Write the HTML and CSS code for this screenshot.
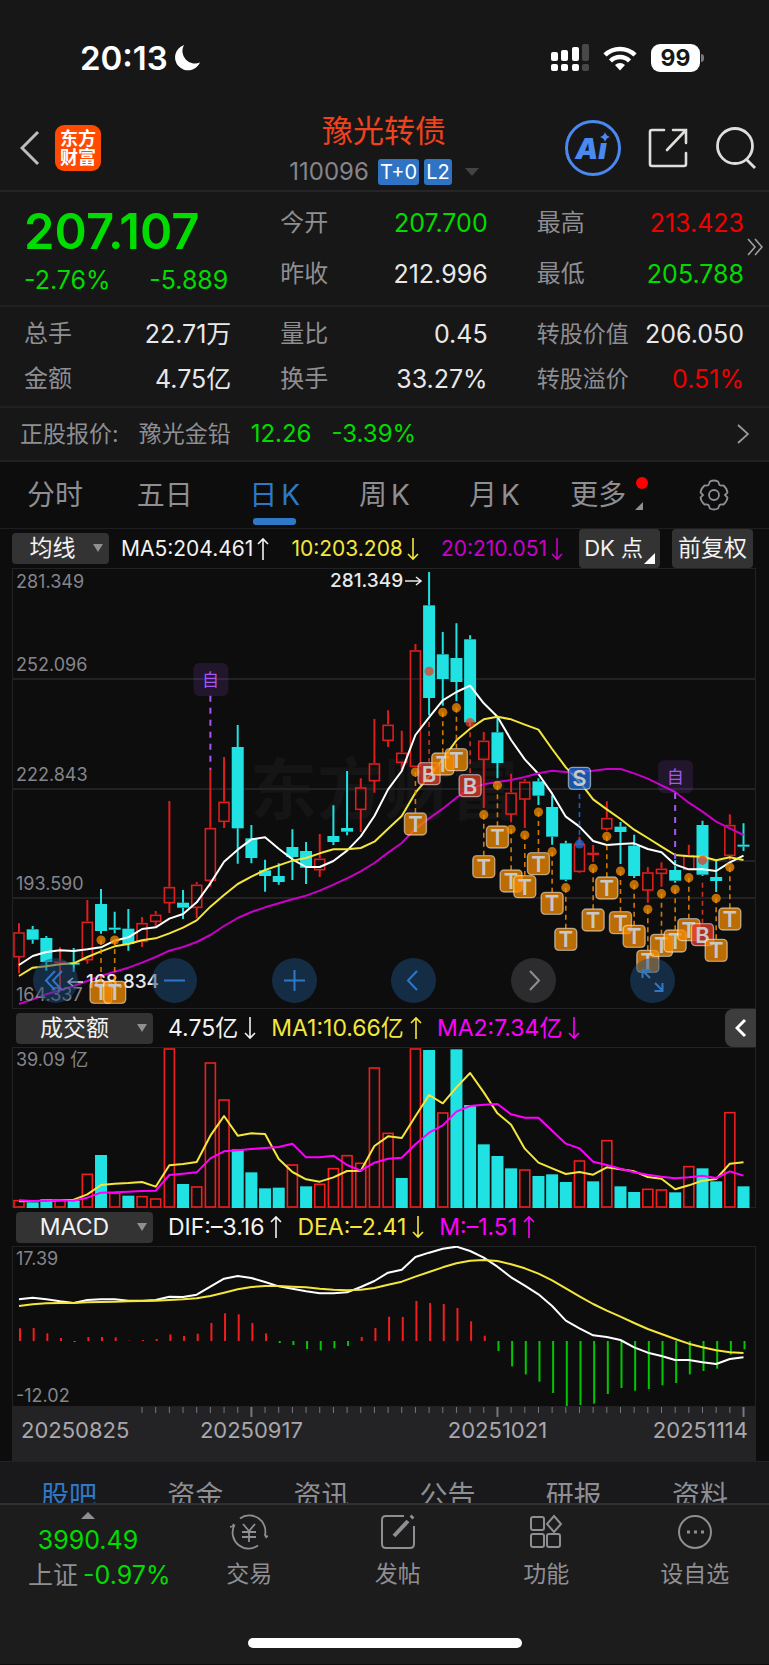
FILE: index.html
```html
<!DOCTYPE html>
<html lang="zh-CN">
<head>
  <meta charset="UTF-8">
  <meta name="viewport" content="width=device-width, initial-scale=1.0">
  <title>豫光转债 110096</title>
  <link rel="stylesheet" href="styles.css">
</head>
<body>
  <svg class="defs" width="0" height="0" aria-hidden="true">
    <symbol id="up" viewBox="0 0 12 24"><path d="M6 23V2M1 7l5-5 5 5" fill="none" stroke="currentColor" stroke-width="1.6"/></symbol>
    <symbol id="down" viewBox="0 0 12 24"><path d="M6 1v21M1 17l5 5 5-5" fill="none" stroke="currentColor" stroke-width="1.6"/></symbol>
  </svg>

  <div class="status">
    <div class="status-time">
      <span>20:13</span>
      <svg width="26" height="26" viewBox="0 0 26 26"><path d="M10 0A13 13 0 1 0 26 17.500A12.500 12.500 0 0 1 10 0z" fill="#fff"/></svg>
    </div>
    <div class="status-icons">
      <svg width="38" height="28" viewBox="0 0 38 28" fill="#fff">
        <rect x="0" y="8" width="7" height="9" rx="2"/><rect x="10" y="6" width="7" height="11" rx="2"/><rect x="21" y="3" width="7" height="14" rx="2"/><rect x="31" y="0" width="7" height="17" rx="2" fill="#48484a"/>
        <rect x="0" y="20" width="7" height="7" rx="2"/><rect x="10" y="20" width="7" height="7" rx="2"/><rect x="21" y="20" width="7" height="7" rx="2"/><rect x="31" y="20" width="7" height="7" rx="2" fill="#48484a"/>
      </svg>
      <svg width="34" height="25" viewBox="0 0 34 25" fill="none" stroke="#fff" stroke-width="4.500">
        <path d="M2 9a21.500 21.500 0 0 1 30 0"/><path d="M7.500 15a13.500 13.500 0 0 1 19 0"/><path d="M17 24.500l-5-5.500a7.500 7.500 0 0 1 10 0z" fill="#fff" stroke="none"/>
      </svg>
      <span class="battery">99</span>
    </div>
  </div>

  <header class="nav">
    <div class="nav-left">
      <button aria-label="返回"><svg width="20" height="36" viewBox="0 0 20 36"><path d="M18 2L2 18l16 16" fill="none" stroke="#bdbdbd" stroke-width="3"/></svg></button>
      <a class="logo" href="#">东方<br>财富</a>
    </div>
    <div class="nav-title">
      <h1>豫光转债</h1>
      <div class="code"><span>110096</span><b>T+0</b><b>L2</b><i></i></div>
    </div>
    <div class="nav-right">
      <button aria-label="Ai">
        <svg width="56" height="56" viewBox="0 0 56 56"><circle cx="28" cy="28" r="26.500" fill="none" stroke="#4a8af0" stroke-width="3"/><text class="ai" x="26" y="39" text-anchor="middle">Aı</text><path d="M40 12q1 4 5 5-4 1-5 5-1-4-5-5 4-1 5-5z" fill="#4a8af0"/></svg>
      </button>
      <button aria-label="分享">
        <svg width="40" height="40" viewBox="0 0 40 40" fill="none" stroke="#dededc" stroke-width="2.600" stroke-linecap="round"><path d="M16 2H4q-2 0-2 2v32q0 2 2 2h32q2 0 2-2V25M25 2h13v13M37 3L19 22"/></svg>
      </button>
      <button aria-label="搜索">
        <svg width="42" height="42" viewBox="0 0 42 42" fill="none" stroke="#dededc" stroke-width="2.800"><circle cx="20" cy="19" r="17.500"/><path d="M31 32l9 9"/></svg>
      </button>
    </div>
  </header>

  <section class="quote">
    <div class="quote-grid top">
      <div>
        <div class="price green">207.107</div>
        <div class="change green"><span>-2.76%</span><span>-5.889</span></div>
      </div>
      <dl>
        <div><dt>今开</dt><dd class="green">207.700</dd></div>
        <div><dt>昨收</dt><dd>212.996</dd></div>
      </dl>
      <dl>
        <div><dt>最高</dt><dd class="red">213.423</dd></div>
        <div><dt>最低</dt><dd class="green">205.788</dd></div>
      </dl>
      <button class="more" aria-label="展开"><svg width="16" height="18" viewBox="0 0 16 18"><path d="M1 1l7 8-7 8M8 1l7 8-7 8" fill="none" stroke="#a0a0a4" stroke-width="1.600"/></svg></button>
    </div>
    <div class="quote-grid bottom">
      <dl>
        <div><dt>总手</dt><dd>22.71万</dd></div>
        <div><dt>金额</dt><dd>4.75亿</dd></div>
      </dl>
      <dl>
        <div><dt>量比</dt><dd>0.45</dd></div>
        <div><dt>换手</dt><dd>33.27%</dd></div>
      </dl>
      <dl class="long">
        <div><dt>转股价值</dt><dd>206.050</dd></div>
        <div><dt>转股溢价</dt><dd class="red">0.51%</dd></div>
      </dl>
    </div>
    <a class="underlying" href="#">
      <span>正股报价:</span><span>豫光金铅</span><span class="num green">12.26</span><span class="num green">-3.39%</span>
      <svg width="12" height="20" viewBox="0 0 12 20"><path d="M1 1l10 9-10 9" fill="none" stroke="#9a9a9e" stroke-width="1.800"/></svg>
    </a>
  </section>

  <nav class="periods">
    <button>分时</button>
    <button>五日</button>
    <button class="active">日<span>K</span></button>
    <button>周<span>K</span></button>
    <button>月<span>K</span></button>
    <button class="more-period">更多</button>
    <button aria-label="设置">
      <svg width="32" height="32" viewBox="0 0 32 32" fill="none" stroke="#8e8e93" stroke-width="1.800"><circle cx="16" cy="16" r="5"/><path d="M12 2.500q4-2 8 0l1.500 3.500q1 .8 4 .5 3.500 3 4 7l-2.500 2.500 2.500 2.500q-.5 4-4 7-3-.3-4 .5L20 29.500q-4 2-8 0L10.500 26q-1-.8-4-.5-3.500-3-4-7L5 16l-2.500-2.500q.5-4 4-7 3 .3 4-.5z"/></svg>
    </button>
  </nav>

  <main class="charts">
    <div class="row main-row">
      <label class="picker small"><select aria-label="主图指标"><option>均线</option></select></label>
      <span class="white">MA5:204.461<svg><use href="#up"/></svg></span>
      <span class="yellow">10:203.208<svg><use href="#down"/></svg></span>
      <span class="purple">20:210.051<svg><use href="#down"/></svg></span>
      <div class="tools">
        <button class="tool dk">DK 点</button>
        <button class="tool">前复权</button>
      </div>
    </div>

    <div class="kline">
      <svg id="kline" viewBox="0 0 745 441"></svg>
      <div class="controls">
        <button aria-label="最左"><svg viewBox="0 0 45 45"><path d="M22 13l-9 9.500 9 9.500M29 13l-9 9.500 9 9.500"/></svg></button>
        <button aria-label="缩小"><svg viewBox="0 0 45 45"><path d="M12 22.500h21"/></svg></button>
        <button aria-label="放大"><svg viewBox="0 0 45 45"><path d="M12 22.500h21M22.500 12v21"/></svg></button>
        <button aria-label="左移"><svg viewBox="0 0 45 45"><path d="M26 13l-9 9.500 9 9.500"/></svg></button>
        <button class="off" aria-label="右移"><svg viewBox="0 0 45 45"><path d="M19 13l9 9.500-9 9.500"/></svg></button>
        <button aria-label="全屏"><svg viewBox="0 0 45 45"><path d="M12.500 20v-8h8M13 13l7 7M32.500 25v8h-8M32 32l-7-7"/></svg></button>
      </div>
    </div>

    <div class="row sub-row">
      <label class="picker"><select aria-label="副图指标一"><option>成交额</option></select></label>
      <span class="white">4.75亿<svg><use href="#down"/></svg></span>
      <span class="yellow">MA1:10.66亿<svg><use href="#up"/></svg></span>
      <span class="magenta">MA2:7.34亿<svg><use href="#down"/></svg></span>
      <button class="fold" aria-label="收起"><svg width="12" height="20" viewBox="0 0 12 20"><path d="M10 2l-8 8 8 8" fill="none" stroke="#fff" stroke-width="3"/></svg></button>
    </div>
    <svg id="volume" viewBox="0 0 745 161"></svg>

    <div class="row sub-row">
      <label class="picker"><select aria-label="副图指标二"><option>MACD</option></select></label>
      <span class="white">DIF:–3.16<svg><use href="#up"/></svg></span>
      <span class="yellow">DEA:–2.41<svg><use href="#down"/></svg></span>
      <span class="magenta">M:–1.51<svg><use href="#up"/></svg></span>
    </div>
    <svg id="macd" viewBox="0 0 745 215"></svg>
  </main>

  <nav class="news">
    <a class="active" href="#">股吧</a>
    <a href="#">资金</a>
    <a href="#">资讯</a>
    <a href="#">公告</a>
    <a href="#">研报</a>
    <a href="#">资料</a>
  </nav>

  <footer class="footer">
    <div class="toolbar">
      <a class="index" href="#">
        <span class="index-value green"><i></i>3990.49</span>
        <span>上证 <em class="green">-0.97%</em></span>
      </a>
      <button>
        <svg width="40" height="36" viewBox="0 0 40 36" fill="none" stroke="#8e8e93" stroke-width="1.800"><path d="M11 4.500A16 16 0 0 1 36 21l2 3M29 31.500A16 16 0 0 1 5 12l-4 1M5 12l-1-2M36 23l3-1"/><path d="M14 10l6 7 6-7M20 17v11M13 18h14M13 23h14"/></svg>
        交易
      </button>
      <button>
        <svg width="40" height="36" viewBox="0 0 40 36" fill="none" stroke="#8e8e93" stroke-width="2"><path d="M26 2H8q-4 0-4 4v24q0 4 4 4h24q4 0 4-4V12"/><path d="M16 22l14-15M33 4l2-2" stroke-width="4"/></svg>
        发帖
      </button>
      <button>
        <svg width="40" height="36" viewBox="0 0 40 36" fill="none" stroke="#8e8e93" stroke-width="2"><rect x="5" y="3" width="13" height="13" rx="2"/><rect x="5" y="20" width="13" height="13" rx="2"/><rect x="21" y="20" width="13" height="13" rx="2"/><path d="M28 2l7 8-7 8-7-8z"/></svg>
        功能
      </button>
      <button>
        <svg width="40" height="36" viewBox="0 0 40 36" fill="none" stroke="#8e8e93" stroke-width="2"><circle cx="20" cy="18" r="16"/><path d="M12 18h3M19 18h3M26 18h3" stroke-width="3"/></svg>
        设自选
      </button>
    </div>
    <div class="home-bar"></div>
  </footer>

  <script src="chart.js"></script>
</body>
</html>
```
FILE: styles.css
```css
* {
  box-sizing: border-box;
}
body {
  margin: 0;
  background: #0d0d0d;
  color: #e8e8e8;
  font-family: Inter, "Noto Sans CJK SC", sans-serif;
}
button, select {
  font: inherit;
  color: inherit;
  background: none;
  border: none;
  padding: 0;
  cursor: pointer;
}
a {
  color: inherit;
  text-decoration: none;
}
svg {
  display: block;
}
dl, dd, h1 {
  margin: 0;
}
.defs {
  position: absolute;
}
.green { color: #00dc00; }
.red { color: #f00000; }
.white { color: #f2f2f2; }
.yellow { color: #f5e63c; }
.purple { color: #c800c8; }
.magenta { color: #ff00ff; }

/* status bar */
.status {
  display: flex;
  justify-content: space-between;
  align-items: center;
  padding: 40px 69px 38px 80px;
  background: #171717;
}
.status-time, .status-icons {
  display: flex;
  align-items: center;
}
.status-time {
  gap: 6px;
  font-size: 33px;
  line-height: 36px;
  font-weight: 600;
  color: #fff;
}
.status-icons {
  gap: 14px;
}
.battery {
  position: relative;
  width: 49px;
  border-radius: 9px;
  background: #fff;
  color: #171717;
  font-size: 23px;
  line-height: 28px;
  font-weight: 700;
  text-align: center;
}
.battery::after {
  content: "";
  position: absolute;
  right: -4px;
  top: 10px;
  width: 3px;
  height: 8px;
  border-radius: 0 3px 3px 0;
  background: #777;
}

/* title bar */
.nav {
  display: grid;
  grid-template-columns: 1fr auto 1fr;
  align-items: center;
  padding: 0 12px 5px 11px;
  background: #171717;
  border-bottom: 2px solid #252527;
}
.nav-left {
  display: flex;
  align-items: center;
  gap: 15px;
  padding: 0 0 4px 9px;
}
.logo {
  width: 46px;
  padding: 4px 0;
  border-radius: 9px;
  background: #ff4a00;
  color: #fff;
  font-size: 18px;
  line-height: 19px;
  font-weight: 700;
  text-align: center;
}
.nav-title {
  text-align: center;
}
.nav-title h1 {
  color: #f0421c;
  font-size: 31px;
  line-height: 34px;
  font-weight: 400;
}
.code {
  display: flex;
  align-items: center;
  justify-content: center;
  gap: 5px;
  margin-top: 11px;
  color: #85858b;
  font-size: 24px;
  line-height: 26px;
}
.code b {
  padding: 0 2px;
  border-radius: 3px;
  background: #2f74c4;
  color: #fff;
  font-size: 20px;
  font-weight: 400;
}
.code span {
  margin-right: 4px;
}
.code i {
  margin-left: 8px;
  border: 7px solid transparent;
  border-top: 8px solid #444;
  border-bottom: 0;
}
.nav-right {
  display: flex;
  justify-content: flex-end;
  align-items: center;
  gap: 27px;
  padding-bottom: 4px;
}
.ai {
  fill: #4a8af0;
  font-size: 29px;
  font-weight: 900;
  font-style: italic;
}

/* quote */
.quote {
  background: #171717;
  font-size: 25px;
  line-height: 30px;
}
.quote-grid {
  position: relative;
  display: grid;
  grid-template-columns: repeat(3, 1fr);
  gap: 49px;
  padding: 12px 25px 12px 24px;
  border-bottom: 2px solid #202022;
}
.quote-grid.top {
  padding-top: 14px;
  padding-bottom: 10px;
}
.quote-grid dl {
  display: grid;
  gap: 15px;
}
.quote-grid.top dl {
  gap: 21px;
  align-content: start;
  padding-top: 2px;
}
.quote-grid dl div {
  display: flex;
  justify-content: space-between;
  white-space: nowrap;
}
dt {
  color: #8e8e93;
  font-size: 24px;
}
.long dt {
  font-size: 23px;
}
.price {
  font-size: 49px;
  line-height: 52px;
  font-weight: 600;
}
.change {
  display: flex;
  justify-content: space-between;
  margin-top: 7px;
  padding-right: 3px;
}
.more {
  position: absolute;
  right: 6px;
  top: 46px;
}
.underlying {
  display: flex;
  align-items: center;
  gap: 20px;
  padding: 11px 20px;
  border-bottom: 2px solid #202022;
  color: #8e8e93;
  font-size: 23px;
}
.num {
  font-size: 24px;
}
.underlying svg {
  margin-left: auto;
}

/* period tabs */
.periods {
  display: grid;
  grid-template-columns: repeat(7, 1fr);
  justify-items: center;
  align-items: center;
  padding: 13px 0;
  border-bottom: 1px solid #1f1f21;
  color: #8e8e93;
  font-size: 28px;
  line-height: 40px;
}
.periods button {
  position: relative;
}
.periods span {
  margin-left: 4px;
}
.periods .active {
  color: #2f78c8;
}
.periods .active::after {
  content: "";
  position: absolute;
  left: 4px;
  right: 4px;
  bottom: -10px;
  height: 7px;
  border-radius: 3px;
  background: #2f78c8;
}
.periods .more-period {
  padding: 0 18px 0 6px;
}
.more-period::before {
  content: "";
  position: absolute;
  right: -4px;
  top: 2px;
  width: 12px;
  height: 12px;
  border-radius: 50%;
  background: #f00;
}
.more-period::after {
  content: "";
  position: absolute;
  right: 1px;
  bottom: 5px;
  border-left: 8px solid transparent;
  border-bottom: 8px solid #8e8e93;
}

/* charts */
.charts {
  padding: 0 12px;
}
.charts > svg, .kline > svg {
  width: 100%;
  height: auto;
}
.row {
  display: flex;
  align-items: center;
  white-space: nowrap;
  font-size: 23px;
  line-height: 38px;
}
.row span {
  display: flex;
  align-items: center;
  gap: 6px;
}
.row span svg {
  width: 12px;
  height: 24px;
}
.main-row {
  gap: 12px;
  padding-right: 4px;
  line-height: 39px;
}
.main-row span {
  gap: 4px;
  font-size: 21px;
}
.main-row span + span {
  margin-left: 10px;
}
.tools {
  display: flex;
  gap: 12px;
  margin-left: auto;
}
.sub-row {
  gap: 15px;
  padding-left: 4px;
}
.picker {
  position: relative;
  width: 137px;
  border-radius: 4px;
  background: #333;
  color: #f2f2f2;
  line-height: 31px;
}
.picker.small {
  width: 97px;
}
.picker select {
  display: block;
  width: 100%;
  height: 31px;
  padding: 0 24px 0 4px;
  appearance: none;
  text-align: center;
  text-align-last: center;
}
.picker.small select {
  padding-left: 8px;
}
.picker::after {
  content: "";
  position: absolute;
  right: 6px;
  top: 11px;
  border: 5px solid transparent;
  border-top: 8px solid #8e8e93;
  border-bottom: 0;
}
.tool {
  position: relative;
  padding: 0 6px;
  border-radius: 4px;
  background: #333;
  color: #f2f2f2;
}
.dk {
  padding: 0 17px 0 5px;
  font-size: 22px;
}
.dk::after {
  content: "";
  position: absolute;
  right: 5px;
  bottom: 4px;
  border-left: 11px solid transparent;
  border-bottom: 11px solid #fff;
}
.fold {
  margin-left: auto;
  margin-right: 1px;
  padding: 9px 9px 9px 10px;
  border-radius: 8px 0 0 8px;
  background: #3d3d3d;
}
.kline {
  position: relative;
}
.controls {
  position: absolute;
  left: 21px;
  right: 82px;
  bottom: 6px;
  display: flex;
  justify-content: space-between;
}
.controls button {
  width: 45px;
  height: 45px;
  border-radius: 50%;
  background: rgba(30, 75, 125, 0.5);
}
.controls path {
  fill: none;
  stroke: #2f78c8;
  stroke-width: 2;
}
.controls .off {
  background: #2c2c2e;
}
.controls .off path {
  stroke: #8e8e93;
}
.grid { fill: none; stroke: #222224; stroke-width: 1; }
.grid-line { stroke: #222224; stroke-width: 2; }
.axis { fill: #85858b; font-size: 18px; }
.peak { fill: #e8e8e8; font-size: 19px; font-weight: 500; }
.watermark { fill: #151515; font-size: 67px; font-weight: 700; text-anchor: middle; }
.line { fill: none; stroke-width: 2; stroke-linejoin: round; }
.badge { font-size: 22px; font-weight: 600; fill: #c8c8c8; text-anchor: middle; }
.self { font-size: 17px; fill: #a855f7; text-anchor: middle; }
.date { fill: #a8a8ac; font-size: 22px; }

/* news tabs, cut off by the footer */
.news {
  display: grid;
  grid-template-columns: repeat(6, 1fr);
  height: 42px;
  padding: 14px 6px 0;
  overflow: hidden;
  background: #19191b;
  border-top: 1px solid #222224;
  color: #8e8e93;
  font-size: 28px;
  line-height: 40px;
  text-align: center;
}
.news .active {
  color: #2f78c8;
}

/* footer */
.footer {
  padding-bottom: 16px;
  background: #1c1c1c;
  border-top: 2px solid #303032;
}
.toolbar {
  display: flex;
  color: #8e8e93;
  font-size: 23px;
  line-height: 32px;
}
.toolbar button {
  flex: 1;
  display: flex;
  flex-direction: column;
  align-items: center;
  gap: 8px;
  padding-top: 9px;
}
.index {
  width: 175px;
  display: flex;
  flex-direction: column;
  gap: 3px;
  padding-left: 28px;
  font-size: 25px;
  white-space: nowrap;
}
.index-value {
  width: 120px;
  display: flex;
  flex-direction: column;
  align-items: center;
}
.index em {
  margin-left: -2px;
  font-style: normal;
}
.index i {
  margin: 7px 0 5px;
  border: 7px solid transparent;
  border-bottom: 7px solid #8e8e93;
  border-top: 0;
}
.home-bar {
  width: 274px;
  height: 10px;
  margin: 47px auto 0;
  border-radius: 5px;
  background: #fff;
}
```
FILE: chart.js
```js
const RED = '#dc1e1e';
const CYAN = '#20e2e2';
const px = i => 7 + 13.67 * i;

// [rise, high, body top, body bottom, low], three units per pixel
const candles = [
  [1,1090,1116,1190,1240],[0,1098,1108,1139,1151],[0,1128,1134,1206,1232],[1,1162,1204,1210,1292],
  [0,1164,1208,1214,1235],[1,1020,1084,1199,1211],[0,987,1032,1113,1121],[0,1055,1103,1109,1120],
  [0,1047,1106,1152,1172],[1,1071,1088,1144,1161],[1,1053,1063,1084,1101],[1,723,980,1028,1059],
  [0,990,1028,1043,1077],[1,966,973,1042,1075],[1,630,803,961,980],[1,591,724,784,804],
  [0,495,561,805,911],[0,795,835,894,910],[0,899,931,948,995],[0,910,948,966,974],
  [0,808,861,891,960],[0,846,873,923,972],[1,822,895,929,951],[0,736,828,846,855],
  [0,633,804,815,826],[1,655,681,748,816],[1,477,609,662,698],[1,451,493,541,561],
  [1,512,577,607,630],[1,252,270,619,619],[0,36,136,414,466],[0,216,283,357,437],
  [0,190,294,366,424],[0,226,238,487,497],[1,516,541,598,744],[0,470,517,609,655],
  [1,641,697,762,787],[1,657,664,717,804],[0,655,664,707,735],[0,706,741,830,854],
  [0,842,850,959,964],[1,830,850,934,938],[1,855,878,885,906],[1,724,773,806,812],
  [0,786,800,816,912],[0,824,857,948,954],[1,921,936,990,1028],[1,907,925,940,980],
  [0,900,930,962,968],[1,854,884,928,930],[0,782,795,944,948],[0,902,951,963,996],
  [1,763,794,886,900],[0,790,854,860,873]
];
const ma5 = [1215,1188,1176,1171,1173,1168,1162,1142,1132,1107,1102,1076,1062,1027,970,905,869,838,832,866,898,921,921,903,872,829,768,688,633,525,472,421,396,377,430,470,540,598,642,701,770,800,843,855,852,850,867,877,914,928,928,933,907,887];
const ma10 = [1248,1223,1219,1213,1210,1191,1174,1159,1152,1141,1135,1120,1103,1081,1040,1005,972,950,930,916,902,894,880,868,868,864,845,806,768,698,650,597,541,506,478,470,478,494,509,567,622,665,718,748,777,809,834,860,885,889,890,901,892,900];
const ma20 = [1332,1318,1303,1291,1278,1263,1248,1235,1223,1208,1191,1172,1161,1146,1125,1098,1074,1056,1042,1030,1018,1007,992,974,955,934,909,878,849,806,775,746,713,686,673,666,660,651,640,632,636,634,632,627,627,640,656,676,696,728,755,785,805,825];

// [index, letter, dot, badge]
const marks = [
  [6,'T',1140,1297],[7,'T',1140,1297],[29,'T',636,792],[30,'B',334,641],[31,'T',457,612],[32,'T',443,599],
  [33,'B',488,677],[34,'T',764,920],[35,'T',676,831],[36,'T',808,963],[37,'T',825,980],[38,'T',756,911],
  [39,'T',875,1030],[40,'T',983,1138],[41,'S',852,655],[42,'T',925,1080],[43,'T',829,984],[44,'T',933,1088],
  [45,'T',974,1129],[46,'T',1048,1204],[47,'T',1001,1156],[48,'T',988,1143],[49,'T',953,1109],
  [50,'B',901,1124],[51,'T',1015,1171],[52,'T',922,1077]
];
const markColors = { T: '#f58c00', B: '#e63c28', S: '#1e6edc' };

const volumes = [599,607,598,597,602,520,465,577,587,587,594,144,552,558,186,297,448,517,565,563,492,559,550,503,464,487,201,397,534,144,150,336,148,315,433,468,505,507,528,523,546,480,544,419,559,576,565,567,577,497,505,544,335,559];
const volumeUp = [0,3,5,7,9,10,11,13,14,15,20,22,23,24,25,26,27,29,31,37,41,43,46,47,49,52];
const vma1 = [604,603,602,601,599,583,555,551,549,546,560,496,492,486,407,348,407,400,402,477,516,538,545,532,513,512,438,409,414,349,285,310,262,219,277,340,374,446,488,505,522,516,524,502,508,514,531,536,568,556,542,537,491,487];
const vma2 = [601,603,603,601,602,593,578,577,575,573,572,525,521,517,475,454,451,447,444,441,431,472,472,467,495,512,488,476,473,433,398,376,335,318,314,312,343,353,353,392,431,445,485,495,506,517,524,530,535,532,527,534,514,527];

const hist = [355,354,370,384,396,381,381,382,392,390,387,373,378,371,339,310,313,339,370,399,405,417,421,415,408,381,354,320,321,273,279,282,294,334,377,423,469,493,515,549,588,585,581,552,534,542,537,526,519,493,483,476,434,418];
const dif = [268,263,268,274,279,270,268,268,272,272,270,260,261,254,230,206,198,204,216,229,236,244,250,250,247,231,213,188,179,141,128,116,110,123,143,170,202,227,253,288,332,355,376,381,390,412,428,438,450,450,457,462,447,442];
const dea = [288,283,280,279,279,277,276,275,274,273,272,270,268,265,258,248,238,231,228,228,230,232,236,239,241,239,234,224,215,200,186,172,160,152,150,153,163,175,191,211,235,259,282,302,320,339,357,372,387,401,412,421,427,429];

const line = (data, y, color) =>
  `<polyline class="line" stroke="${color}" points="${data.map((v, i) => px(i) + ',' + y(v)).join(' ')}"/>`;

function drawKline() {
  const y = v => (v - 24) / 3;
  let s = '<text class="watermark" x="372" y="246">东方财富</text>';
  s += '<rect class="grid" x="0.5" y="0.5" width="743" height="440"/>';
  [111, 221, 330].forEach(v => { s += `<line class="grid-line" x1="0" x2="744" y1="${v}" y2="${v}"/>`; });
  s += '<line class="grid-line" x1="690" x2="744" y1="293" y2="293"/>';

  candles.forEach(([up, hi, top, bottom, low], i) => {
    const x = px(i);
    const c = up ? RED : CYAN;
    const h = (bottom - top) / 3;
    s += `<path d="M${x} ${y(hi)}V${y(top)}M${x} ${y(bottom)}V${y(low)}" stroke="${c}" stroke-width="2"/>`;
    if (up && h > 3) {
      s += `<rect x="${x - 5}" y="${y(top) + 1}" width="10" height="${h - 1}" fill="none" stroke="${c}" stroke-width="1.6"/>`;
    } else {
      s += `<rect x="${x - 6}" y="${y(top)}" width="12" height="${h}" fill="${c}"/>`;
    }
  });

  s += line(ma5, y, '#fff') + line(ma10, y, '#f5e63c') + line(ma20, y, '#c800c8');

  [['281.349', 20], ['252.096', 103], ['222.843', 213], ['193.590', 322], ['164.337', 433]].forEach(([t, v]) => {
    s += `<text class="axis" x="4" y="${v}">${t}</text>`;
  });
  s += '<text class="peak" x="318" y="19">281.349</text><path d="M393 13h16M404 9l5 4-5 4" fill="none" stroke="#e8e8e8" stroke-width="1.6"/>';
  s += '<text class="peak" x="74" y="420">168.834</text><path d="M71 414H56M61 410l-5 4 5 4" fill="none" stroke="#e8e8e8" stroke-width="1.6"/>';

  marks.forEach(([i, t, dot, badge]) => {
    const x = px(i);
    const c = markColors[t];
    const from = t === 'B' ? Math.max(dot, candles[i][4] + 20) : dot;
    const end = t === 'S' ? badge + 34 : badge - 34;
    s += `<line x1="${x}" x2="${x}" y1="${y(from)}" y2="${y(end)}" stroke="${c}" stroke-width="1.6" stroke-dasharray="5 4" opacity=".85"/>`;
    s += `<circle cx="${x}" cy="${y(dot)}" r="4.6" fill="${c}" opacity=".75"/>`;
    s += `<rect x="${x - 11}" y="${y(badge) - 11}" width="22" height="22" rx="4" fill="${c}" fill-opacity=".75" stroke="#fff" stroke-opacity=".5" stroke-width="1.4"/>`;
    s += `<text class="badge" x="${x}" y="${y(badge) + 8}">${t}</text>`;
  });

  [[14, 357, 630], [48, 649, 918]].forEach(([i, box, end]) => {
    const x = px(i);
    s += `<rect x="${x - 17}" y="${y(box) - 16}" width="35" height="33" rx="6" fill="#a855f7" fill-opacity=".13"/>`;
    s += `<text class="self" x="${x}" y="${y(box) + 7}">自</text>`;
    s += `<line x1="${x}" x2="${x}" y1="${y(box + 50)}" y2="${y(end)}" stroke="#a855f7" stroke-width="2" stroke-dasharray="6 6"/>`;
  });
  document.getElementById('kline').innerHTML = s;
}

function drawVolume() {
  const y = v => (v - 141) / 3;
  let s = '<rect class="grid" x="0.5" y="0.5" width="743" height="160"/>';
  volumes.forEach((v, i) => {
    const x = px(i);
    if (volumeUp.includes(i)) {
      s += `<rect x="${x - 5}" y="${y(v) + 1}" width="10" height="${159 - y(v)}" fill="none" stroke="#f01e1e" stroke-width="1.6"/>`;
    } else {
      s += `<rect x="${x - 6}" y="${y(v)}" width="12" height="${161 - y(v)}" fill="${CYAN}"/>`;
    }
  });
  s += line(vma1, y, '#f5e63c') + line(vma2, y, '#ff00ff');
  s += '<text class="axis" x="4" y="19">39.09 亿</text>';
  document.getElementById('volume').innerHTML = s;
}

function drawMacd() {
  const y = v => (v - 108) / 3;
  let s = '<rect class="grid" x="0.5" y="0.5" width="743" height="160"/>';
  s += '<rect x="0" y="161" width="744" height="54" fill="#232325"/>';
  hist.forEach((v, i) => {
    s += `<line x1="${px(i) + 1}" x2="${px(i) + 1}" y1="${y(393)}" y2="${y(v)}" stroke="${v < 393 ? '#f01e1e' : '#00c800'}" stroke-width="2"/>`;
  });
  s += line(dif, y, '#fff') + line(dea, y, '#f5e63c');
  for (let i = 9; i < 54; i++) {
    const long = i % 18 === 17;
    s += `<line x1="${px(i)}" x2="${px(i)}" y1="161" y2="${long ? 171 : 167}" stroke="#77777b" stroke-width="${long ? 2 : 1}"/>`;
  }
  s += '<text class="axis" x="4" y="19">17.39</text><text class="axis" x="4" y="156">-12.02</text>';
  s += '<text class="date" x="9" y="192">20250825</text>';
  s += `<text class="date" x="${px(17)}" y="192" text-anchor="middle">20250917</text>`;
  s += `<text class="date" x="${px(35)}" y="192" text-anchor="middle">20251021</text>`;
  s += '<text class="date" x="736" y="192" text-anchor="end">20251114</text>';
  document.getElementById('macd').innerHTML = s;
}

drawKline();
drawVolume();
drawMacd();
```
